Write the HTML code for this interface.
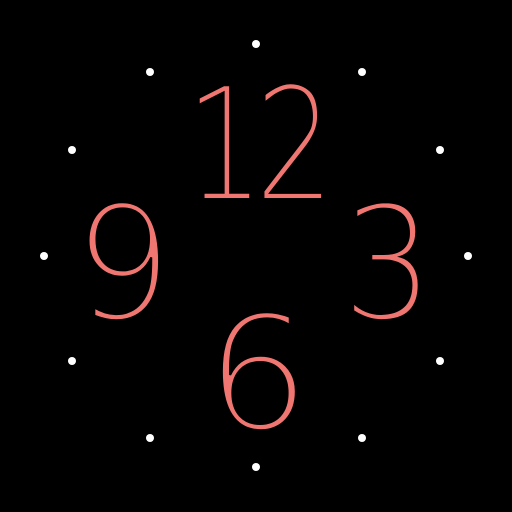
<!DOCTYPE html>
<html><head><style>html,body{margin:0;padding:0;background:#000;width:512px;height:512px;overflow:hidden}</style></head>
<body>
<svg width="512" height="512" viewBox="0 0 512 512" xmlns="http://www.w3.org/2000/svg">
<rect width="512" height="512" fill="#000"/>
<g fill="#fff">
<circle cx="256" cy="44" r="4"/><circle cx="150" cy="72" r="4"/><circle cx="362" cy="72" r="4"/>
<circle cx="72" cy="150" r="4"/><circle cx="440" cy="150" r="4"/><circle cx="44" cy="256" r="4"/>
<circle cx="468" cy="256" r="4"/><circle cx="72" cy="361" r="4"/><circle cx="440" cy="361" r="4"/>
<circle cx="150" cy="438" r="4"/><circle cx="362" cy="438" r="4"/><circle cx="256" cy="467" r="4"/>
</g>
<g fill="#f07672" stroke="#000" stroke-width="2" font-family="'DejaVu Sans ExtraLight','DejaVu Sans','Liberation Sans',sans-serif" font-weight="200" font-size="156" text-anchor="middle">
<text transform="translate(255,199) scale(0.8,1)" letter-spacing="-12">12</text>
<text transform="translate(388,318) scale(0.92,1)">3</text>
<text transform="translate(123,318) scale(1,1)">9</text>
<text transform="translate(258,428) scale(1.05,1)">6</text>
</g>
</svg>
</body></html>
